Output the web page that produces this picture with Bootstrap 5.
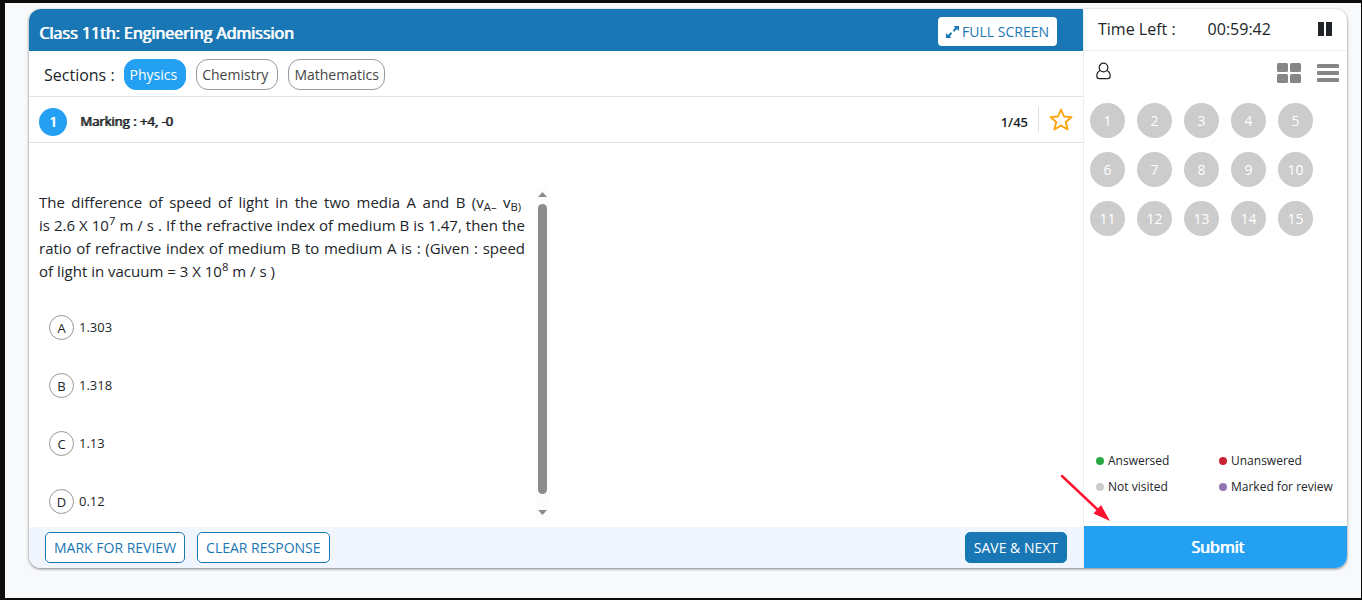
<!DOCTYPE html>
<html lang="en">
<head>
<meta charset="utf-8">
<meta name="viewport" content="width=device-width, initial-scale=1">
<title>Class 11th: Engineering Admission</title>
<link href="https://cdn.jsdelivr.net/npm/bootstrap@5.3.0/dist/css/bootstrap.min.css" rel="stylesheet">
<style>
  body { font-family: "Open Sans", sans-serif; font-size: 14px; line-height: 20px; color: #212529; background: #0c0c0c; }
  button { font-family: inherit; }
  .page-frame { min-height: 100vh; border: solid #0c0c0c; border-width: 3px 1px 2px 5px; background: #f8f9fb; padding: 6px 14px 30px 24px; }
  .exam { border-radius: 12px; background: #fff; box-shadow: 0 1px 3px rgba(0,0,0,.5); }
  .exam-main { border-radius: 12px 0 0 12px; overflow: hidden; }
  .side-panel { flex: 0 0 264px; border-left: 1px solid #eceef0; border-radius: 0 12px 12px 0; }
  .exam-head { height: 42px; background: #1a77b5; padding: 2px 26px 0 10px; }
  .exam-title { font-size: 16px; line-height: 24px; font-weight: 400; }
  .strong-text { text-shadow: 1px 0 0 currentColor; }
  .full-btn { height: 29px; padding: 2px 8px 0; border: 0; border-radius: 4px; background: #fff; color: #1a77b5; gap: 3px; }
  .bar { height: 46px; border-bottom: 1px solid #e0e1e5; padding: 0 10px; }
  .sections { gap: 10px; padding: 2px 10px 0 15px; font-size: 16px; }
  .pill { height: 31px; padding: 1px 5px 0; border: 1px solid #999; border-radius: 12px; background: #fff; color: #444; font-size: 14px; }
  .pill.active { background: #24a0f2; border-color: #24a0f2; color: #fff; padding-right: 8px; margin-left: -1px; }
  .pill-wide { padding-right: 9px; }
  .q-no { width: 28px; height: 28px; background: #24a0f2; color: #fff; margin-top: 4px; }
  .marking { font-size: 13px; margin: 2px 0 0 13px; }
  .count { font-size: 13px; font-weight: 600; padding: 5px 10px 0 0; margin-right: 10px; border-right: 1px solid #dcdee2; }
  .star { background: none; border: 0; padding: 0; line-height: 0; }
  .q-scroll { width: 511px; margin: 43px 0 6px 10px; }
  .q-text { font-size: 15px; line-height: 23px; text-align: justify; margin: 5px 0 32px; }
  .q-body { padding-right: 10px; }
  .opt { height: 58px; padding-left: 10px; font-size: 13px; gap: 5px; }
  .opt-key { width: 25px; height: 25px; border: 1px solid #999; border-radius: 50%; }
  .opt-value { padding-top: 2px; }
  .btn-check:checked + .opt .opt-key { background: #24a0f2; color: #fff; }
  .scroll-bar { width: 15px; background: #fcfcfc; padding: 6px 3px; gap: 7px; }
  .thumb { background: #8b8b8b; border-radius: 5px; width: 9px; margin-bottom: 9px; }
  .exam-foot { height: 41px; background: #f1f5fe; padding: 0 16px; gap: 12px; }
  .foot-btn { height: 31px; padding: 1px 8px 0; border: 1px solid #1a77b5; border-radius: 5px; background: #fff; color: #1a77b5; }
  .foot-btn.solid { background: #1a77b5; color: #fff; }
  .timer { height: 42px; border-bottom: 1px solid #eceef0; padding: 0 15px 2px 14px; font-size: 16px; }
  .time-value { margin: 0 auto 0 32px; }
  .tool { background: none; border: 0; padding: 0; line-height: 0; }
  .view-row { height: 46px; padding: 0 8px 2px 12px; }
  .palette { display: grid; grid-template-columns: repeat(auto-fill, 35px); gap: 14px 12px; padding: 6px 24px 6px 6px; }
  .num { width: 35px; height: 35px; border: 0; border-radius: 50%; background: #ccc; color: #fff; padding: 0; font-size: 14px; }
  .legend-list { display: grid; grid-template-columns: 123px 1fr; row-gap: 6px; padding: 0 0 29px 12px; font-size: 12px; margin: 0; list-style: none; white-space: nowrap; }
  .legend-list li { display: flex; align-items: center; gap: 4px; }
  .dot { width: 8px; height: 8px; border-radius: 50%; }
  .submit-btn { height: 42px; border: 0; background: #24a0f2; color: #fff; font-size: 16px; border-radius: 0 0 12px 0; padding-left: 10px; }
  .pointer { position: absolute; left: -26px; bottom: 45px; pointer-events: none; }
</style>
</head>
<body>
<div class="page-frame d-flex">
  <main class="exam d-flex flex-grow-1">
    <section class="exam-main d-flex flex-column flex-grow-1">
      <header class="exam-head d-flex align-items-center justify-content-between text-white">
        <h1 class="exam-title strong-text mb-0 mt-1">Class 11th: Engineering Admission</h1>
        <button type="button" class="full-btn d-flex align-items-center">
          <svg width="13" height="12" viewBox="0 0 13 12" aria-hidden="true"><path d="M8 0h5v5l-2-2-3 3-1-2 2-2zM5 12H0V7l2 2 3-3 1 2-2 2z" fill="#1a77b5"/></svg>
          FULL SCREEN
        </button>
      </header>
      <nav class="bar sections d-flex align-items-center" aria-label="Sections">
        <span>Sections :</span>
        <button type="button" class="pill active">Physics</button>
        <button type="button" class="pill pill-wide">Chemistry</button>
        <button type="button" class="pill">Mathematics</button>
      </nav>
      <div class="bar d-flex align-items-center">
        <span class="q-no strong-text rounded-circle d-flex align-items-center justify-content-center">1</span>
        <span class="marking strong-text">Marking : +4, -0</span>
        <span class="count ms-auto">1/45</span>
        <button type="button" class="star" aria-label="Bookmark question">
          <svg width="24" height="24" viewBox="0 0 24 24"><path d="M12 1.500 15 8.500 22.600 9.100 16.800 14 18.600 21.500 12 17.500 5.400 21.500 7.200 14 1.400 9.100 9 8.500Z" fill="none" stroke="#ffa30f" stroke-width="1.900" stroke-linejoin="round"/></svg>
        </button>
      </div>
      <div class="q-scroll d-flex flex-grow-1">
        <div class="q-body flex-grow-1">
          <p class="q-text">The difference of speed of light in the two media A and B (v<sub>A–</sub> v<sub>B)</sub>&nbsp; is&nbsp;2.6 X 10<sup>7</sup> m / s . If the refractive index of medium B is 1.47, then the ratio of refractive index of medium B to medium A is : (Given : speed of light in vacuum = 3 X 10<sup>8</sup> m / s )</p>
          <input type="radio" class="btn-check" name="answer" id="optA"><label class="opt d-flex" for="optA"><span class="opt-key d-flex align-items-center justify-content-center">A</span><span class="opt-value">1.303</span></label>
          <input type="radio" class="btn-check" name="answer" id="optB"><label class="opt d-flex" for="optB"><span class="opt-key d-flex align-items-center justify-content-center">B</span><span class="opt-value">1.318</span></label>
          <input type="radio" class="btn-check" name="answer" id="optC"><label class="opt d-flex" for="optC"><span class="opt-key d-flex align-items-center justify-content-center">C</span><span class="opt-value">1.13</span></label>
          <input type="radio" class="btn-check" name="answer" id="optD"><label class="opt d-flex h-auto" for="optD"><span class="opt-key d-flex align-items-center justify-content-center">D</span><span class="opt-value">0.12</span></label>
        </div>
        <div class="scroll-bar d-flex flex-column align-items-center" aria-hidden="true">
          <svg width="9" height="5" viewBox="0 0 9 5"><path d="M0 5 4.500 0 9 5z" fill="#8b8b8b"/></svg>
          <div class="thumb flex-grow-1"></div>
          <svg width="9" height="5" viewBox="0 0 9 5"><path d="M0 0 4.500 5 9 0z" fill="#8b8b8b"/></svg>
        </div>
      </div>
      <footer class="exam-foot d-flex align-items-center">
        <button type="button" class="foot-btn">MARK FOR REVIEW</button>
        <button type="button" class="foot-btn">CLEAR RESPONSE</button>
        <button type="button" class="foot-btn solid ms-auto">SAVE &amp; NEXT</button>
      </footer>
    </section>
    <aside class="side-panel d-flex flex-column position-relative">
      <div class="timer d-flex align-items-center">
        <span>Time Left :</span>
        <span class="time-value">00:59:42</span>
        <button type="button" class="tool" aria-label="Pause">
          <svg width="14" height="14" viewBox="0 0 14 14"><path d="M0 0h6v14H0zM8 0h6v14H8z" fill="#212529"/></svg>
        </button>
      </div>
      <div class="view-row d-flex align-items-center">
        <svg class="mb-1" width="15" height="18" viewBox="0 0 15 18" aria-hidden="true"><g fill="none" stroke="#212529" stroke-width="1.200"><circle cx="7.500" cy="5.500" r="4.300"/><path d="M4.200 8.500C1.800 9.600.8 11.500.8 14c0 2 .8 2.700 2.500 2.700h8.400c1.700 0 2.500-.7 2.500-2.700 0-2.500-1-4.400-3.400-5.500"/></g></svg>
        <button type="button" class="tool ms-auto me-3" aria-label="Grid view">
          <svg width="24" height="20" viewBox="0 0 24 20" fill="#868686"><rect width="11" height="9" rx="1.500"/><rect x="13" width="11" height="9" rx="1.500"/><rect y="11" width="11" height="9" rx="1.500"/><rect x="13" y="11" width="11" height="9" rx="1.500"/></svg>
        </button>
        <button type="button" class="tool" aria-label="List view">
          <svg width="22" height="18" viewBox="0 0 22 18" fill="#868686"><rect width="22" height="4" rx="1"/><rect y="7" width="22" height="4" rx="1"/><rect y="14" width="22" height="4" rx="1"/></svg>
        </button>
      </div>
      <div class="palette">
        <button type="button" class="num">1</button><button type="button" class="num">2</button><button type="button" class="num">3</button><button type="button" class="num">4</button><button type="button" class="num">5</button>
        <button type="button" class="num">6</button><button type="button" class="num">7</button><button type="button" class="num">8</button><button type="button" class="num">9</button><button type="button" class="num">10</button>
        <button type="button" class="num">11</button><button type="button" class="num">12</button><button type="button" class="num">13</button><button type="button" class="num">14</button><button type="button" class="num">15</button>
      </div>
      <ul class="legend-list mt-auto">
        <li><span class="dot" style="background:#28a745"></span>Answersed</li>
        <li><span class="dot" style="background:#c82333"></span>Unanswered</li>
        <li><span class="dot" style="background:#ccc"></span>Not visited</li>
        <li><span class="dot" style="background:#9475b4"></span>Marked for review</li>
      </ul>
      <button type="button" class="submit-btn strong-text">Submit</button>
      <svg class="pointer" width="56" height="52" viewBox="0 0 56 52" aria-hidden="true"><path d="M4 5 40 39" stroke="#ff1230" stroke-width="2.500" stroke-linecap="round"/><path d="M52 50 43 34 39.500 38 35.500 42.500z" fill="#ff1230"/></svg>
    </aside>
  </main>
</div>
<script src="https://cdn.jsdelivr.net/npm/bootstrap@5.3.0/dist/js/bootstrap.bundle.min.js"></script>
</body>
</html>
